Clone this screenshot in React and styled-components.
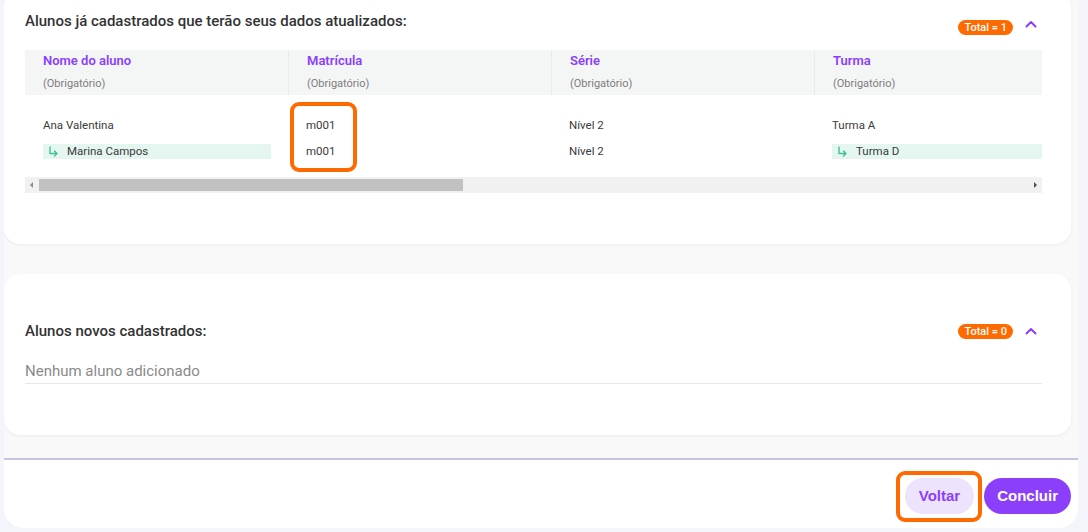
import React from "react";
import styled, { createGlobalStyle } from "styled-components";

const GlobalStyle = createGlobalStyle`
  html, body {
    margin: 0;
    padding: 0;
    background: #f4f4fb;
    font-family: Roboto, "Noto Sans", sans-serif;
    color: #333333;
  }
  * { box-sizing: border-box; }
`;

const Page = styled.div`
  height: 532px;
  padding: 0 10px 4px 4px;
  display: flex;
  overflow: hidden;
`;

const Panel = styled.div`
  flex: 1;
  background: #f9f9f9;
  border-radius: 0 0 20px 20px;
  display: flex;
  flex-direction: column;
  overflow: hidden;
`;

const Content = styled.div`
  margin-top: -8px;
  padding-right: 7px;
  display: flex;
  flex-direction: column;
  gap: 30px;
`;

const Card = styled.section`
  background: #ffffff;
  border-radius: 16px;
  box-shadow: 0 1px 3px rgba(0, 0, 0, 0.06);
  padding: ${(p) => p.$pad};
`;

const CardHeader = styled.div`
  height: 20px;
  display: flex;
  align-items: ${(p) => (p.$top ? "flex-start" : "center")};
  justify-content: space-between;
  padding-right: 5px;
`;

const Title = styled.h2`
  margin: 0;
  font-size: 15px;
  line-height: 20px;
  font-weight: 500;
  color: #333333;
`;

const HeaderRight = styled.div`
  display: flex;
  align-items: center;
  gap: 12px;
  margin-top: ${(p) => p.$drop || 0}px;
`;

const Badge = styled.span`
  background: #ff6a00;
  color: #ffffff;
  font-size: 11px;
  font-weight: 500;
  line-height: 15px;
  height: 15px;
  padding: 0 6px;
  border-radius: 8px;
  white-space: nowrap;
`;

const Chevron = styled.svg`
  width: 12px;
  height: 8px;
  margin-top: ${(p) => p.$lift || 0}px;
`;

const TableWrap = styled.div`
  margin-top: 19px;
  overflow: hidden;
`;

const Grid = styled.div`
  display: grid;
  grid-template-columns: repeat(4, 263px);
  width: max-content;
`;

const HeadCell = styled.div`
  background: #f4f5f5;
  padding: 2px 17px 3px 18px;
  border-left: ${(p) => (p.$first ? "none" : "1px solid #e9ebeb")};
  display: flex;
  flex-direction: column;
`;

const HeadName = styled.span`
  font-size: 13px;
  line-height: 18px;
  font-weight: 600;
  color: #8a3ffc;
`;

const HeadHint = styled.span`
  margin-top: 6px;
  font-size: 11px;
  line-height: 16px;
  color: #7d7d7d;
`;

const Body = styled.div`
  position: relative;
  padding: 17px 0 13px;
`;

const Cell = styled.div`
  height: 26px;
  padding: 0 17px 0 18px;
  display: flex;
  align-items: center;
  font-size: 11.5px;
  color: #3a3a3a;
`;

const Changed = styled.span`
  flex: 1;
  display: flex;
  align-items: center;
  gap: 8px;
  height: 15px;
  padding-left: 5px;
  background: #e5f6f1;
  white-space: nowrap;
`;

const Annotation = styled.div`
  position: absolute;
  border: 4px solid #ff6a00;
  border-radius: 9px;
  pointer-events: none;
`;

const Scrollbar = styled.div`
  height: 16px;
  background: #f1f1f1;
  display: flex;
  align-items: center;
  padding: 0 5px;
  gap: 6px;
`;

const Arrow = styled.span`
  width: 0;
  height: 0;
  border-top: 3px solid transparent;
  border-bottom: 3px solid transparent;
  ${(p) =>
    p.$dir === "left"
      ? "border-right: 3px solid #8a8a8a;"
      : "border-left: 3px solid #505050; margin-left: auto;"}
`;

const Thumb = styled.span`
  width: 424px;
  height: 12px;
  background: #c1c1c1;
`;

const Empty = styled.div`
  margin-top: 20px;
  padding-bottom: 2px;
  border-bottom: 1px solid #e8e8e8;
  font-size: 15px;
  line-height: 20px;
  color: #8a8a8a;
`;

const Footer = styled.footer`
  margin-top: 23px;
  border-top: 2px solid #c6c4df;
  background: #ffffff;
  height: 70px;
  flex-shrink: 0;
  display: flex;
  align-items: center;
  justify-content: flex-end;
  gap: 10px;
  padding: 3px 7px 0 0;
`;

const Mark = styled.span`
  position: relative;
  display: inline-flex;
  &::after {
    content: "";
    position: absolute;
    inset: -7px -8px -8px -9px;
    border: 4px solid #ff6a00;
    border-radius: 9px;
  }
`;

const Button = styled.button`
  height: 36px;
  border: none;
  border-radius: 18px;
  padding: 0 ${(p) => (p.$primary ? 13 : 14)}px;
  font-family: "Liberation Sans", Arial, sans-serif;
  font-size: 15px;
  font-weight: 700;
  cursor: pointer;
  background: ${(p) => (p.$primary ? "#8c3ffb" : "#ede3fd")};
  color: ${(p) => (p.$primary ? "#ffffff" : "#8a3ffc")};
`;

const ChevronUp = ({ lift }) => (
  <Chevron $lift={lift} viewBox="0 0 12 8" fill="none">
    <path d="M1.5 6.5 6 2l4.5 4.5" stroke="#8c3ffb" strokeWidth="2" strokeLinecap="round" strokeLinejoin="round" />
  </Chevron>
);

const ReplyArrow = () => (
  <svg width="11" height="11" viewBox="0 0 11 11" fill="none">
    <path d="M2 1v6.5h7M6.5 5l2.5 2.5L6.5 10" stroke="#3fbf98" strokeWidth="1.4" strokeLinecap="round" strokeLinejoin="round" />
  </svg>
);

const columns = ["Nome do aluno", "Matrícula", "Série", "Turma"];

const rows = [
  ["Ana Valentina", "m001", "Nível 2", "Turma A"],
  [{ changed: "Marina Campos" }, "m001", "Nível 2", { changed: "Turma D" }],
];

function Value({ v }) {
  if (typeof v === "object") {
    return (
      <Changed>
        <ReplyArrow />
        {v.changed}
      </Changed>
    );
  }
  return v;
}

export default function App() {
  return (
    <>
      <GlobalStyle />
      <Page>
        <Panel>
          <Content>
            <Card $pad="19px 29px 51px 21px">
              <CardHeader $top>
                <Title>Alunos já cadastrados que terão seus dados atualizados:</Title>
                <HeaderRight $drop={9}>
                  <Badge>Total = 1</Badge>
                  <ChevronUp lift={-8} />
                </HeaderRight>
              </CardHeader>
              <TableWrap>
                <Grid>
                  {columns.map((c, i) => (
                    <HeadCell key={c} $first={i === 0}>
                      <HeadName>{c}</HeadName>
                      <HeadHint>(Obrigatório)</HeadHint>
                    </HeadCell>
                  ))}
                </Grid>
                <Body>
                  <Grid>
                    {rows.map((r, ri) =>
                      r.map((v, ci) => (
                        <Cell key={`${ri}-${ci}`}>
                          <Value v={v} />
                        </Cell>
                      ))
                    )}
                  </Grid>
                  <Annotation style={{ left: 265, top: 7, width: 67, height: 70 }} />
                </Body>
                <Scrollbar>
                  <Arrow $dir="left" />
                  <Thumb />
                  <Arrow $dir="right" />
                </Scrollbar>
              </TableWrap>
            </Card>
            <Card $pad="47px 29px 51px 21px">
              <CardHeader>
                <Title>Alunos novos cadastrados:</Title>
                <HeaderRight>
                  <Badge>Total = 0</Badge>
                  <ChevronUp />
                </HeaderRight>
              </CardHeader>
              <Empty>Nenhum aluno adicionado</Empty>
            </Card>
          </Content>
          <Footer>
            <Mark>
              <Button>Voltar</Button>
            </Mark>
            <Button $primary>Concluir</Button>
          </Footer>
        </Panel>
      </Page>
    </>
  );
}
